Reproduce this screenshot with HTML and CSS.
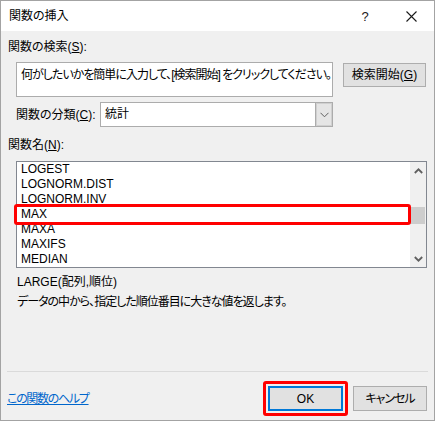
FILE: index.html
```html
<!DOCTYPE html>
<html lang="ja">
<head>
<meta charset="utf-8">
<title>関数の挿入</title>
<link rel="stylesheet" href="styles.css">
</head>
<body>
<div class="window">
  <div class="titlebar">
    <span class="title">関数の挿入</span>
    <span class="caption-btn help">?</span>
    <span class="caption-btn close">
      <svg width="11" height="11" viewBox="0 0 11 11"><path d="M0.5 0.5 L10.5 10.5 M10.5 0.5 L0.5 10.5" stroke="#1a1a1a" stroke-width="1.1" fill="none"/></svg>
    </span>
  </div>
  <div class="content">
    <div class="label">関数の検索(<u>S</u>):</div>
    <div class="search-row">
      <div class="textbox">何がしたいかを簡単に入力して、[検索開始] をクリックしてください。</div>
      <div class="button search-btn">検索開始(<u>G</u>)</div>
    </div>
    <div class="category-row">
      <span class="cat-label">関数の分類(<u>C</u>):</span>
      <div class="select">
        <span class="select-value">統計</span>
        <span class="drop">
          <svg width="9" height="6" viewBox="0 0 9 6"><path d="M0.5 0.8 L4.5 4.8 L8.5 0.8" stroke="#606060" stroke-width="1" fill="none"/></svg>
        </span>
      </div>
    </div>
    <div class="label list-label">関数名(<u>N</u>):</div>
    <div class="listbox">
      <div class="items">
        <div class="item">LOGEST</div>
        <div class="item">LOGNORM.DIST</div>
        <div class="item">LOGNORM.INV</div>
        <div class="item">MAX</div>
        <div class="item">MAXA</div>
        <div class="item">MAXIFS</div>
        <div class="item">MEDIAN</div>
      </div>
      <div class="scrollbar">
        <span class="arrow">
          <svg width="9" height="6" viewBox="0 0 9 6"><path d="M0.8 5 L4.5 1.3 L8.2 5" stroke="#606060" stroke-width="1.8" fill="none"/></svg>
        </span>
        <div class="track"><div class="thumb"></div></div>
        <span class="arrow">
          <svg width="9" height="6" viewBox="0 0 9 6"><path d="M0.8 1 L4.5 4.7 L8.2 1" stroke="#606060" stroke-width="1.8" fill="none"/></svg>
        </span>
      </div>
      <div class="highlight"></div>
    </div>
    <div class="syntax">LARGE(配列,順位)</div>
    <div class="desc">データの中から、指定した順位番目に大きな値を返します。</div>
    <div class="separator"></div>
    <div class="bottom-row">
      <a class="help-link" href="#">この関数のヘルプ</a>
      <div class="actions">
        <div class="ok-mark"><div class="button ok-btn">OK</div></div>
        <div class="button cancel-btn">キャンセル</div>
      </div>
    </div>
  </div>
</div>
</body>
</html>
```
FILE: styles.css
```css
* { box-sizing: border-box; }
html, body { margin: 0; padding: 0; background: #f0f0f0; }
body {
  font-family: "Liberation Sans", "Noto Sans CJK JP", sans-serif;
  font-size: 12px;
  color: #000;
  font-feature-settings: "palt";
}
u { text-decoration: underline; text-underline-offset: 1px; }

.window {
  width: 435px;
  height: 421px;
  border: 1px solid #a3a3a3;
  background: #f0f0f0;
  display: flex;
  flex-direction: column;
}

.titlebar {
  height: 30px;
  background: #fff;
  display: flex;
  align-items: center;
  flex: none;
}
.title { flex: 1; padding-left: 8px; font-size: 12px; line-height: 16px; color: #000; }
.caption-btn {
  width: 46px;
  height: 30px;
  display: flex;
  align-items: center;
  justify-content: center;
  font-size: 14px;
  color: #1a1a1a;
}
.help { font-family: "Liberation Sans", sans-serif; font-size: 13px; }

.content {
  flex: 1;
  padding: 8px 7px 0 7px;
  display: flex;
  flex-direction: column;
}
.label { line-height: 16px; height: 16px; }

.search-row {
  display: flex;
  align-items: flex-start;
  margin: 7px 0 0 8px;
}
.textbox {
  width: 317px;
  height: 35px;
  background: #fff;
  border: 1px solid #acacac;
  padding: 4px 0 0 4px;
  line-height: 16px;
  white-space: nowrap;
  overflow: hidden;
  letter-spacing: -1px;
}
.button {
  background: #e1e1e1;
  border: 1px solid #adadad;
  display: flex;
  align-items: center;
  justify-content: center;
  line-height: 16px;
}
.search-btn {
  width: 83px;
  height: 24px;
  margin: 1px 0 0 10px;
}

.category-row {
  display: flex;
  align-items: center;
  margin: 5px 0 0 8px;
}
.cat-label { width: 84px; line-height: 16px; }
.select {
  width: 233px;
  height: 25px;
  background: #fff;
  border: 1px solid #acacac;
  display: flex;
  align-items: stretch;
}
.select-value { flex: 1; padding-left: 4px; line-height: 23px; }
.drop {
  width: 17px;
  background: #e5e5e5;
  border-left: 1px solid #acacac;
  box-shadow: inset 0 0 0 1px #d0d0d0;
  display: flex;
  align-items: center;
  justify-content: center;
}

.list-label { margin-top: 10px; }
.listbox {
  position: relative;
  margin: 8px 0 0 8px;
  width: 411px;
  height: 107px;
  background: #fff;
  border: 1px solid #828790;
  display: flex;
}
.items { flex: 1; padding-left: 4px; }
.item { height: 15px; line-height: 15px; white-space: nowrap; }
.scrollbar {
  width: 16px;
  background: #f0f0f0;
  display: flex;
  flex-direction: column;
}
.arrow {
  height: 17px;
  display: flex;
  align-items: center;
  justify-content: center;
}
.track { flex: 1; padding-top: 28px; }
.thumb { height: 17px; background: #cdcdcd; margin-right: 1px; }
.highlight {
  position: absolute;
  left: -3px;
  top: 42px;
  width: 397px;
  height: 21px;
  border: 3px solid #ff0000;
  border-radius: 3px;
}

.syntax { margin: 6px 0 0 9px; line-height: 16px; }
.desc { margin: 4px 0 0 9px; line-height: 16px; letter-spacing: -1px; }

.separator {
  margin: 61px -1px 0 -1px;
  height: 1px;
  background: #dadada;
}

.bottom-row {
  display: flex;
  align-items: center;
  justify-content: space-between;
  margin-top: 9px;
}
.help-link { color: #0066cc; text-decoration: underline; line-height: 16px; margin-left: -1px; letter-spacing: -1.3px; }
.actions { display: flex; align-items: center; gap: 5px; }
.ok-mark {
  border: 3px solid #ff0000;
  border-radius: 3px;
  padding: 2px;
}
.ok-btn {
  width: 75px;
  height: 25px;
  border: 2px solid #0078d7;
}
.cancel-btn {
  width: 74px;
  height: 25px;
  letter-spacing: -1px;
}
```
